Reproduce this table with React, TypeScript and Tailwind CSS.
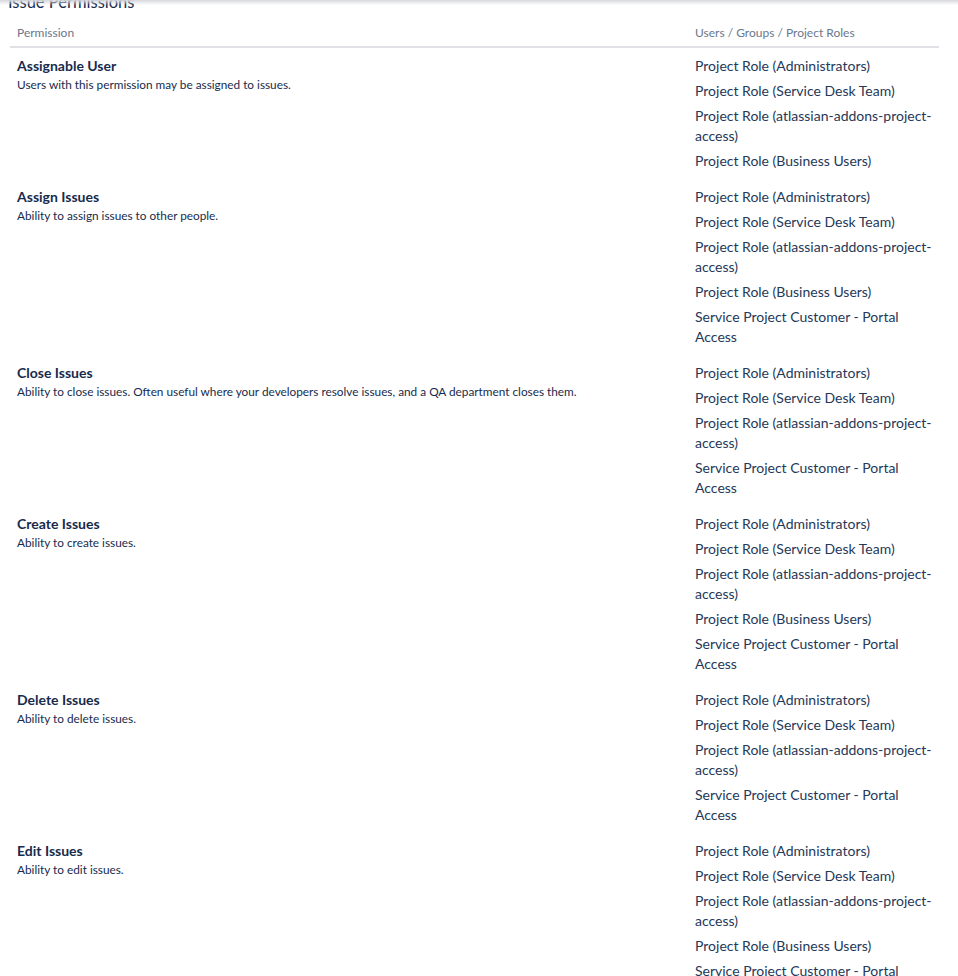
type Perm = { title: string; desc: string; roles: string[] };

const ADMIN = "Project Role (Administrators)";
const SDT = "Project Role (Service Desk Team)";
const ADDONS = "Project Role (atlassian-addons-project-access)";
const BIZ = "Project Role (Business Users)";
const CUST = "Service Project Customer - Portal Access";

const perms: Perm[] = [
  { title: "Assignable User", desc: "Users with this permission may be assigned to issues.", roles: [ADMIN, SDT, ADDONS, BIZ] },
  { title: "Assign Issues", desc: "Ability to assign issues to other people.", roles: [ADMIN, SDT, ADDONS, BIZ, CUST] },
  {
    title: "Close Issues",
    desc: "Ability to close issues. Often useful where your developers resolve issues, and a QA department closes them.",
    roles: [ADMIN, SDT, ADDONS, CUST],
  },
  { title: "Create Issues", desc: "Ability to create issues.", roles: [ADMIN, SDT, ADDONS, BIZ, CUST] },
  { title: "Delete Issues", desc: "Ability to delete issues.", roles: [ADMIN, SDT, ADDONS, CUST] },
  { title: "Edit Issues", desc: "Ability to edit issues.", roles: [ADMIN, SDT, ADDONS, BIZ, CUST] },
];

export default function App() {
  return (
    <div
      className="relative h-[976px] overflow-hidden bg-white text-[#172b4d]"
      style={{ fontFamily: "Lato, 'Noto Sans', sans-serif" }}
    >
      <div className="pointer-events-none absolute inset-x-0 top-0 z-10 h-[5px] bg-gradient-to-b from-[#d6d7dc] to-white/0" />
      <h2 className="mt-[-8px] ml-[8px] h-[26px] text-[16.5px] leading-[20px] font-normal text-[#172b4d]">Issue Permissions</h2>
      <div className="ml-[10px] w-[929px]">
        <div className="flex border-b-2 border-[#dfe1e6] pt-[7px] pb-[5px] text-[12px] leading-[16px] text-[#6b778c]">
          <div className="w-[678px] pl-[7px]">Permission</div>
          <div className="flex-1 pl-[7px]">Users / Groups / Project Roles</div>
        </div>
        {perms.map((p) => (
          <div key={p.title} className="flex pt-[8px] pb-[8px]">
            <div className="w-[678px] pl-[7px]">
              <div className="text-[14px] leading-[20px] font-bold text-[#172b4d]">{p.title}</div>
              <div className="text-[11.8px] leading-[17px] text-[#172b4d]">{p.desc}</div>
            </div>
            <div className="flex w-[251px] flex-col gap-[5px] pl-[7px] pr-[2px]">
              {p.roles.map((r, i) => (
                <div key={i} className="text-[14px] leading-[20px] text-[#253858]">
                  {r}
                </div>
              ))}
            </div>
          </div>
        ))}
      </div>
    </div>
  );
}
